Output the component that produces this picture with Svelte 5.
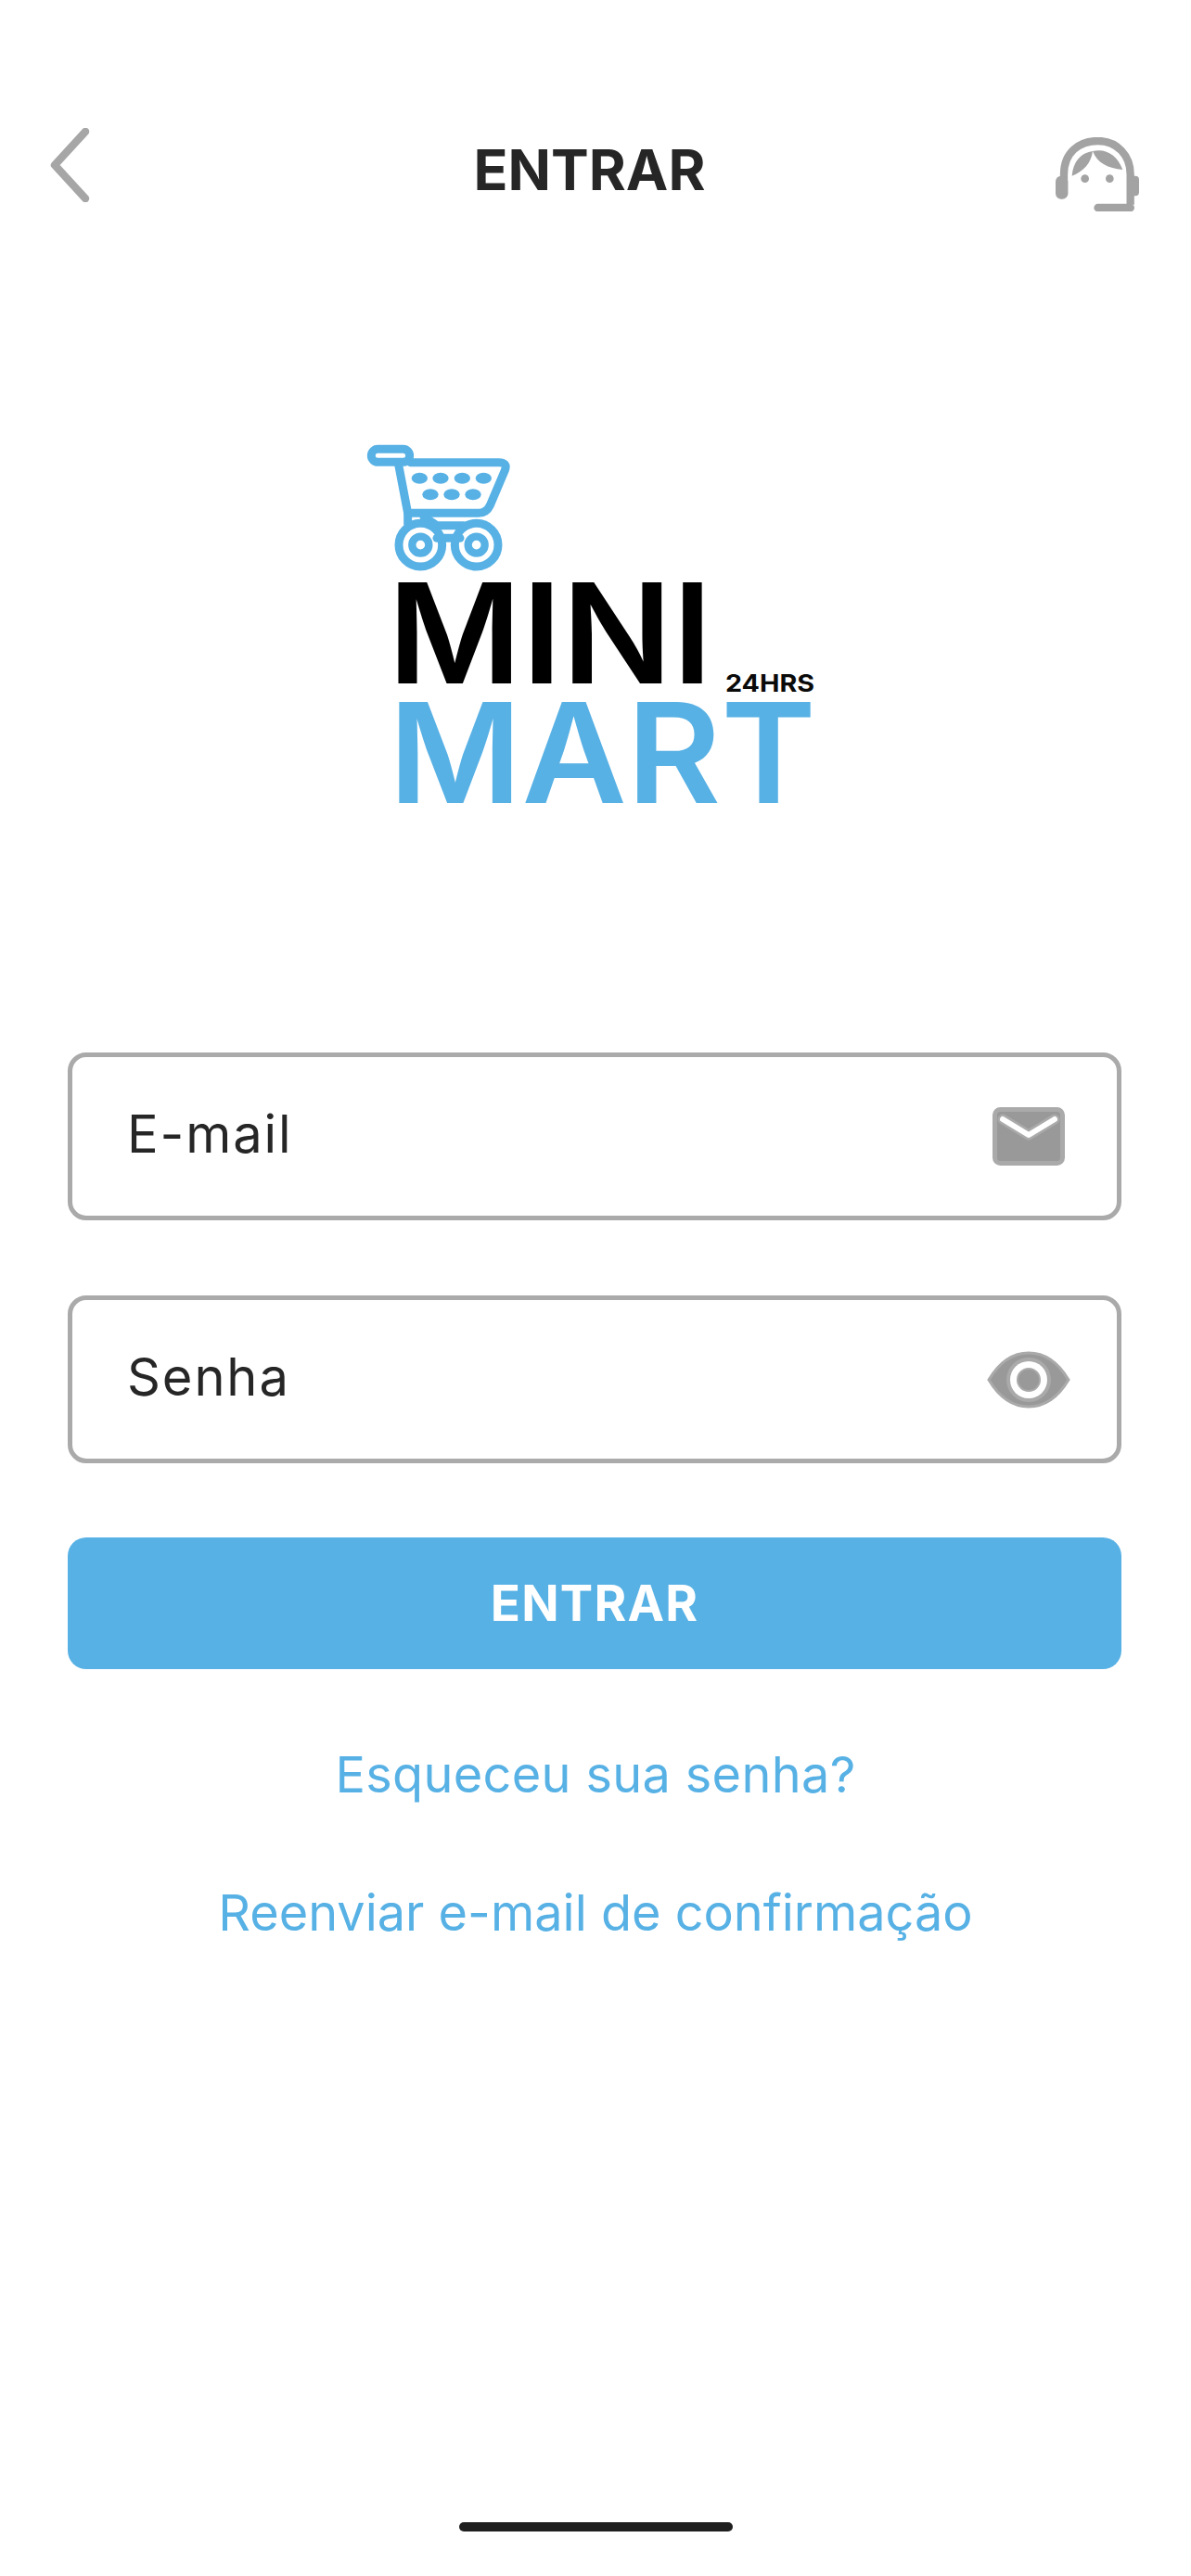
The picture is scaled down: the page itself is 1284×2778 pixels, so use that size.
<script>
  let email = 'E-mail';
  let senha = 'Senha';
</script>

<main class="page">
  <header class="topbar">
    <button class="icon-btn back" aria-label="Voltar">
      <svg width="44" height="80" viewBox="0 0 44 80">
        <path d="M39 4 L6 40 L39 76" fill="none" stroke="#a6a6a6" stroke-width="8.5" stroke-linecap="round" stroke-linejoin="round" />
      </svg>
    </button>
    <h1>ENTRAR</h1>
    <button class="icon-btn support" aria-label="Suporte">
      <svg width="90" height="80" viewBox="85 50 270 240">
        <g fill="#a3a3a3">
          <path d="M112 238 V170 C112 100 160 62 222 62 C285 62 327 110 327 170 V268" fill="none" stroke="#a3a3a3" stroke-width="25" />
          <rect x="85" y="175" width="40" height="75" rx="18" />
          <rect x="328" y="175" width="27" height="65" rx="12" />
          <path d="M327 278 H222" fill="none" stroke="#a3a3a3" stroke-width="26" stroke-linecap="round" />
          <path d="M205 95 C170 100 142 125 138 175 C175 160 200 135 205 95 Z" />
          <path d="M205 95 C250 85 285 110 302 155 C255 150 220 135 205 95 Z" />
          <circle cx="180" cy="184" r="13" />
          <circle cx="260" cy="184" r="13" />
        </g>
      </svg>
    </button>
  </header>

  <svg class="logo" width="500" height="410" viewBox="390 470 500 410" role="img" aria-label="Mini Mart 24hrs">
    <g transform="translate(369 450) scale(0.3333)" fill="none" stroke="#58b1e5" stroke-width="27" stroke-linejoin="round" stroke-linecap="round">
      <rect x="88" y="103" width="124" height="42" rx="21" />
      <path d="M175 148 L206 310 V345" />
      <path d="M214 146 H500 Q530 146 520 172 L472 285 Q460 310 435 310 H206" />
      <path d="M258 322 L300 350 H385" />
      <path d="M300 391 H375" />
      <circle cx="247" cy="413" r="70" />
      <circle cx="428" cy="413" r="70" />
      <circle cx="247" cy="413" r="27" stroke-width="25" />
      <circle cx="428" cy="413" r="27" stroke-width="25" />
      <g fill="#58b1e5" stroke="none">
        {#each [244, 312, 382, 451] as cx}
          <ellipse {cx} cy="197" rx="26" ry="18" />
        {/each}
        {#each [279, 348, 417] as cx}
          <ellipse {cx} cy="250" rx="26" ry="18" />
        {/each}
      </g>
    </g>
    <text class="brand" x="416" y="737" fill="#000" textLength="350" lengthAdjust="spacingAndGlyphs">MINI</text>
    <text class="brand" x="417" y="866" fill="#58b1e5" textLength="461" lengthAdjust="spacingAndGlyphs">MART</text>
    <text class="tag" x="780" y="746" fill="#0a0a0a" textLength="96" lengthAdjust="spacingAndGlyphs">24HRS</text>
  </svg>

  <form class="form">
    <div class="field">
      <span>{email}</span>
      <svg class="mail" width="78" height="63" viewBox="0 0 78 63">
        <rect x="2.5" y="2.5" width="73" height="58" rx="6" fill="#999" stroke="#aaa" stroke-width="5" />
        <path d="M11 13 L39 30 L67 13" fill="none" stroke="#aaa" stroke-width="11" stroke-linecap="round" stroke-linejoin="round" />
        <path d="M11 13 L39 30 L67 13" fill="none" stroke="#fff" stroke-width="6" stroke-linecap="round" stroke-linejoin="round" />
      </svg>
    </div>

    <div class="field second">
      <span>{senha}</span>
      <svg class="eye" width="90" height="62" viewBox="0 0 90 62">
        <path d="M2 31 C14 11 29 2 45 2 C61 2 76 11 88 31 C76 51 61 60 45 60 C29 60 14 51 2 31 Z" fill="#999" stroke="#aaa" stroke-width="3" />
        <circle cx="45" cy="31" r="24" fill="#aaa" />
        <circle cx="45" cy="31" r="20" fill="#fff" />
        <circle cx="45" cy="31" r="12" fill="#999" stroke="#aaa" stroke-width="2" />
      </svg>
    </div>

    <button type="button" class="submit">ENTRAR</button>
  </form>

  <a class="link first" href="#esqueceu">Esqueceu sua senha?</a>
  <a class="link" href="#reenviar">Reenviar e-mail de confirmação</a>

  <div class="home-bar"></div>
</main>

<style>
  :global(body) {
    margin: 0;
    background: #fff;
  }

  .page {
    height: 2778px;
    overflow: hidden;
    display: flex;
    flex-direction: column;
    align-items: center;
    font-family: Inter, "Liberation Sans", sans-serif;
    color: #262626;
  }

  .topbar {
    width: 100%;
    box-sizing: border-box;
    margin-top: 138px;
    padding: 0 56px 0 53px;
    height: 90px;
    display: grid;
    grid-template-columns: 1fr auto 1fr;
    align-items: center;
  }

  .topbar h1 {
    margin: 0 10px 0 0;
    font-size: 61px;
    font-weight: 700;
    line-height: 90px;
    color: #262626;
  }

  .icon-btn {
    border: 0;
    padding: 0;
    background: none;
    display: flex;
  }

  .back {
    align-self: start;
  }

  .support {
    justify-self: end;
    align-self: end;
  }

  .logo {
    display: block;
    margin-top: 242px;
  }

  .brand {
    font-family: Inter, sans-serif;
    font-size: 150px;
    font-weight: 600;
  }

  .tag {
    font-family: Inter, sans-serif;
    font-size: 26px;
    font-weight: 700;
  }

  .form {
    margin-top: 255px;
    align-self: flex-start;
    margin-left: 73px;
    width: 1136px;
    display: flex;
    flex-direction: column;
  }

  .field {
    height: 181px;
    box-sizing: border-box;
    border: 5px solid #aaa;
    border-radius: 20px;
    padding: 0 56px 0 59px;
    display: flex;
    align-items: center;
    justify-content: space-between;
    font-size: 56px;
    letter-spacing: 1.9px;
    color: #262626;
  }

  .field span {
    margin-bottom: 5px;
  }

  .field.second {
    margin-top: 81px;
    padding-right: 50px;
  }

  .submit {
    margin-top: 80px;
    height: 142px;
    border: 0;
    border-radius: 20px;
    background: #57b1e5;
    color: #fff;
    font-family: inherit;
    font-size: 53px;
    font-weight: 700;
    letter-spacing: 1.2px;
  }

  .link {
    color: #57b1e5;
    font-size: 54px;
    line-height: 66px;
    text-decoration: none;
  }

  .link.first {
    margin-top: 81px;
    margin-bottom: 83px;
    letter-spacing: 0.35px;
  }

  .home-bar {
    width: 295px;
    height: 10px;
    border-radius: 5px;
    background: #1f1f1f;
    margin-top: auto;
    margin-bottom: 48px;
  }
</style>
